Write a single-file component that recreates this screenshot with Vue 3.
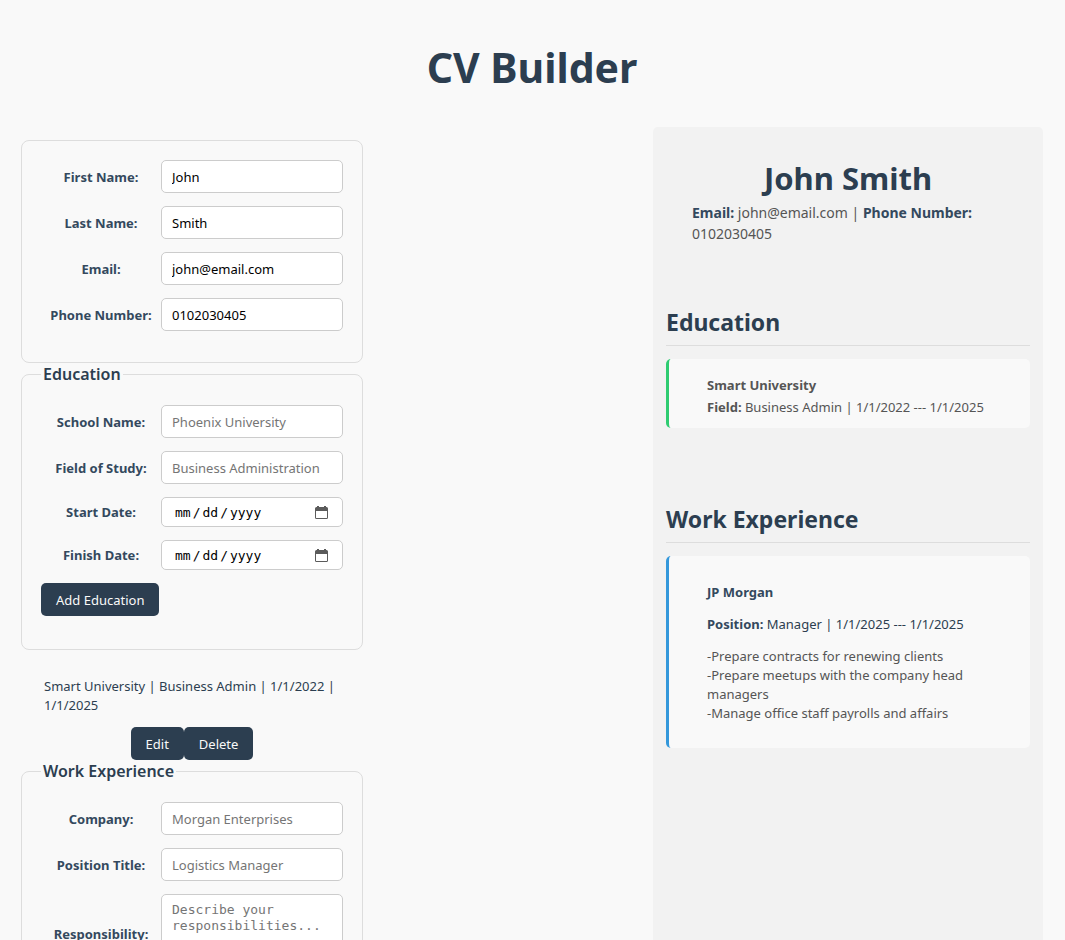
<script setup>
import { reactive } from 'vue'

const general = reactive([
  { id: 'first-name', label: 'First Name:', type: 'text', value: 'John' },
  { id: 'last-name', label: 'Last Name:', type: 'text', value: 'Smith' },
  { id: 'email', label: 'Email:', type: 'email', value: 'john@email.com' },
  { id: 'phone', label: 'Phone Number:', type: 'tel', value: '0102030405' },
])

const education = reactive([
  { id: 'school', label: 'School Name:', type: 'text', value: '', placeholder: 'Phoenix University' },
  { id: 'field', label: 'Field of Study:', type: 'text', value: '', placeholder: 'Business Administration' },
  { id: 'start', label: 'Start Date:', type: 'date', value: '' },
  { id: 'finish', label: 'Finish Date:', type: 'date', value: '' },
])

const work = reactive([
  { id: 'company', label: 'Company:', type: 'text', value: '', placeholder: 'Morgan Enterprises' },
  { id: 'position', label: 'Position Title:', type: 'text', value: '', placeholder: 'Logistics Manager' },
])

const duties = [
  '-Prepare contracts for renewing clients',
  '-Prepare meetups with the company head managers',
  '-Manage office staff payrolls and affairs',
]
</script>

<template>
  <div class="page">
    <h1 class="title">CV Builder</h1>
    <main class="layout">
      <form class="editor" @submit.prevent>
        <fieldset class="group">
          <div v-for="f in general" :key="f.id" class="row">
            <label :for="f.id">{{ f.label }}</label>
            <input :id="f.id" v-model="f.value" :type="f.type" />
          </div>
        </fieldset>

        <fieldset class="group titled">
          <legend>Education</legend>
          <div v-for="f in education" :key="f.id" class="row">
            <label :for="f.id">{{ f.label }}</label>
            <input :id="f.id" v-model="f.value" :type="f.type" :placeholder="f.placeholder" />
          </div>
          <button type="submit" class="btn">Add Education</button>
        </fieldset>

        <div class="entry">
          <p>Smart University | Business Admin | 1/1/2022 | 1/1/2025</p>
          <div class="actions">
            <button type="button" class="btn">Edit</button>
            <button type="button" class="btn">Delete</button>
          </div>
        </div>

        <fieldset class="group titled">
          <legend>Work Experience</legend>
          <div v-for="f in work" :key="f.id" class="row">
            <label :for="f.id">{{ f.label }}</label>
            <input :id="f.id" v-model="f.value" :type="f.type" :placeholder="f.placeholder" />
          </div>
          <div class="row">
            <label for="responsibility">Responsibility:</label>
            <textarea id="responsibility" placeholder="Describe your responsibilities..."></textarea>
          </div>
        </fieldset>
      </form>

      <article class="preview">
        <header class="person">
          <h2 class="name">John Smith</h2>
          <p class="contact">
            <strong>Email:</strong> john@email.com | <strong>Phone Number:</strong> 0102030405
          </p>
        </header>

        <section class="section">
          <h3>Education</h3>
          <div class="card school">
            <p><strong>Smart University</strong></p>
            <p><strong>Field:</strong> Business Admin | 1/1/2022 --- 1/1/2025</p>
          </div>
        </section>

        <section class="section">
          <h3>Work Experience</h3>
          <div class="card job">
            <p><strong>JP Morgan</strong></p>
            <p><strong>Position:</strong> Manager | 1/1/2025 --- 1/1/2025</p>
            <div class="duties">
              <p v-for="d in duties" :key="d">{{ d }}</p>
            </div>
          </div>
        </section>
      </article>
    </main>
  </div>
</template>

<style>
body {
  background: #f9f9f9;
}
</style>

<style scoped>
.page {
  padding: 39px 22px 0 21px;
  font-family: "Noto Sans", sans-serif;
  font-size: 13px;
  line-height: 19px;
  color: #2c3e50;
}
.page *,
.page {
  box-sizing: border-box;
}
h1, h2, h3, p {
  margin: 0;
}
.title {
  margin-bottom: 32px;
  font-size: 41px;
  line-height: 56px;
  text-align: center;
}
.layout {
  display: grid;
  grid-template-columns: 342fr 390fr;
  column-gap: 290px;
}
.editor {
  padding-top: 13px;
}
.group {
  min-width: 0;
  margin: 0;
  padding: 19px 19px 31px;
  border: 1px solid #ddd;
  border-radius: 8px;
}
.titled {
  padding: 20px 19px 33px;
}
legend {
  padding: 0 2px;
  font-size: 16px;
  line-height: 22px;
  font-weight: 600;
}
.row {
  display: grid;
  grid-template-columns: 120px 1fr;
  align-items: center;
}
.row + .row,
.row + .btn {
  margin-top: 13px;
}
label {
  padding-top: 1px;
  font-weight: 700;
  color: #34495e;
  text-align: center;
}
input,
textarea {
  width: 100%;
  min-width: 0;
  padding: 7px 10px 5px;
  border: 1px solid #ccc;
  border-radius: 5px;
  background: #fff;
  color: #000;
  font-family: "Noto Sans", sans-serif;
  font-size: 13px;
  line-height: 19px;
}
input[type="date"] {
  height: 30px;
  padding: 4px 14px 4px 12px;
  font-family: "DejaVu Sans Mono", monospace;
}
input[type="date"]::-webkit-datetime-edit-text {
  padding: 0 1px;
}
input[type="date"]::-webkit-calendar-picker-indicator {
  width: 13px;
  height: 13px;
  padding: 0;
  background: url("data:image/svg+xml,%3Csvg xmlns='http://www.w3.org/2000/svg' viewBox='0 0 13 13'%3E%3Cpath fill='%235b5b5b' fill-rule='evenodd' d='M2 0h2v1h5V0h2v1h.5A1.5 1.5 0 0 1 13 2.500V11.500A1.500 1.500 0 0 1 11.500 13H1.500A1.500 1.500 0 0 1 0 11.500V2.500A1.500 1.500 0 0 1 1.500 1H2zM1 5v6.500a.5.5 0 0 0 .5.5h10a.5.5 0 0 0 .5-.5V5z'/%3E%3C/svg%3E") center / 13px 13px no-repeat;
}
textarea {
  display: block;
  height: 80px;
  padding: 7px 10px;
  font-family: "DejaVu Sans Mono", monospace;
  line-height: 16px;
}
.btn {
  padding: 8px 15px 6px;
  border: 0;
  border-radius: 5px;
  background: #2c3e50;
  color: #f9f9f9;
  font-family: inherit;
  font-size: 13px;
  line-height: 19px;
}
.entry {
  padding: 27px 23px 0;
}
.entry p {
  margin-bottom: 12px;
}
.actions {
  display: flex;
  justify-content: center;
}
.preview {
  padding: 30px 13px;
  border-radius: 5px;
  background: #f2f2f2;
}
.person {
  padding: 0 26px;
}
.name {
  margin-bottom: 2px;
  font-size: 31px;
  line-height: 43px;
  text-align: center;
}
.contact {
  font-size: 14px;
  line-height: 21px;
  color: #555;
}
.contact strong {
  color: #34495e;
}
.section {
  padding-top: 63px;
}
.section + .section {
  padding-top: 76px;
}
h3 {
  margin-bottom: 13px;
  padding-bottom: 8px;
  border-bottom: 1px solid #ddd;
  font-size: 23px;
  line-height: 30px;
}
.card {
  border-left: 3px solid;
  border-radius: 5px;
  background: #f9f9f9;
}
.school {
  padding: 15px 38px 10px;
  border-color: #2ecc71;
}
.school p {
  line-height: 22px;
  color: #555;
}
.job {
  display: grid;
  gap: 13px;
  padding: 27px 38px 25px;
  border-color: #3498db;
}
.job strong {
  color: #34495e;
}
.duties {
  color: #555;
}
</style>
